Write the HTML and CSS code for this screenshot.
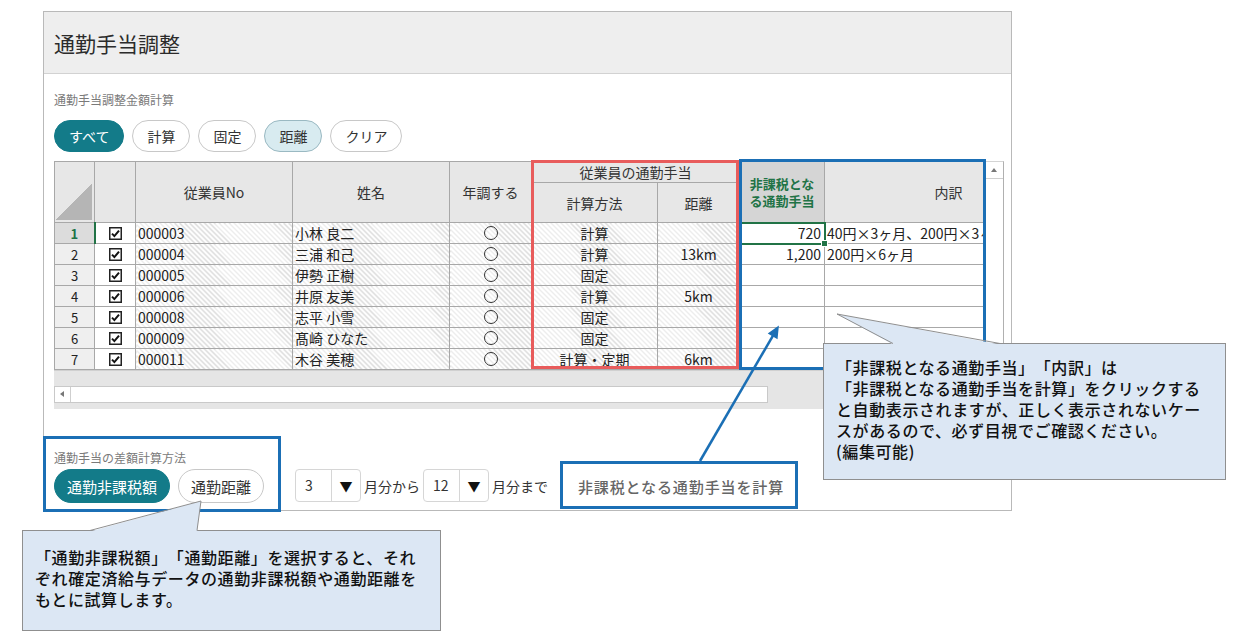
FILE: index.html
```html
<!DOCTYPE html>
<html lang="ja">

<head>
	<meta charset="UTF-8">
	<title>通勤手当調整</title>
	<link rel="stylesheet" href="styles.css">
</head>

<body>
	<div class="sheet">
		<section class="panel">
			<header class="panel-head">
				<h1>通勤手当調整</h1>
			</header>
			<div class="panel-body">
				<p class="caption">通勤手当調整金額計算</p>
				<div class="filters">
					<button class="pill active">すべて</button>
					<button class="pill">計算</button>
					<button class="pill">固定</button>
					<button class="pill soft">距離</button>
					<button class="pill">クリア</button>
				</div>

				<div class="grid">
					<div class="grid-main">
						<div class="grid-view">
							<table>
								<colgroup>
									<col style="width:40px">
									<col style="width:41px">
									<col style="width:157px">
									<col style="width:157px">
									<col style="width:82px">
									<col style="width:126px">
									<col style="width:82px">
									<col style="width:85px">
									<col style="width:248px">
								</colgroup>
								<thead>
									<tr class="head-top">
										<th rowspan="2" class="corner"></th>
										<th rowspan="2"></th>
										<th rowspan="2">従業員No</th>
										<th rowspan="2">姓名</th>
										<th rowspan="2">年調する</th>
										<th colspan="2">従業員の通勤手当</th>
										<th rowspan="2" class="tax">非課税とな<br>る通勤手当</th>
										<th rowspan="2">内訳</th>
									</tr>
									<tr class="head-sub">
										<th>計算方法</th>
										<th>距離</th>
									</tr>
								</thead>
								<tbody id="grid-body">
									<!-- rows are filled in by the script below -->
								</tbody>
							</table>
						</div>
						<div class="vscroll"><span class="vscroll-up"></span></div>
					</div>
					<div class="grid-foot">
						<div class="hscroll"><span class="hscroll-left"></span></div>
					</div>
				</div>

				<div class="calc-row">
					<div class="method">
						<p class="caption">通勤手当の差額計算方法</p>
						<div class="method-buttons">
							<button class="pill big active">通勤非課税額</button>
							<button class="pill big">通勤距離</button>
						</div>
					</div>
					<div class="months">
						<div class="select"><span class="val">3</span><span class="caret">▼</span></div>
						<span>月分から</span>
						<div class="select"><span class="val">12</span><span class="caret">▼</span></div>
						<span>月分まで</span>
					</div>
					<button class="calc-button">非課税となる通勤手当を計算</button>
				</div>
			</div>
		</section>

		<div class="mark mark-red"></div>
		<div class="mark mark-grid"></div>
		<div class="mark mark-method"></div>
		<div class="mark mark-calc"></div>

		<div class="note note-table">
			「非課税となる通勤手当」「内訳」は<br>
			「非課税となる通勤手当を計算」をクリックする<br>
			と自動表示されますが、正しく表示されないケー<br>
			スがあるので、必ず目視でご確認ください。<br>
			(編集可能)
		</div>
		<div class="note note-method">
			「通勤非課税額」「通勤距離」を選択すると、それ<br>
			ぞれ確定済給与データの通勤非課税額や通勤距離を<br>
			もとに試算します。
		</div>

		<svg class="overlay" width="1235" height="643" viewBox="0 0 1235 643">
			<!-- callout tails -->
			<polygon points="837,314 893,344.5 1000,344.5" fill="#dce7f4" />
			<polyline points="893,343.5 837,314 1000,343.5" fill="none" stroke="#8f8f8f" stroke-width="1" />
			<polygon points="201,501 90,531.5 197,531.5" fill="#dce7f4" />
			<polyline points="90,530.5 201,501 197,530.5" fill="none" stroke="#8f8f8f" stroke-width="1" />
			<!-- arrow from the calc button to the grid -->
			<line x1="700" y1="461" x2="773" y2="335.6" stroke="#1b6fb5" stroke-width="2.5" />
			<polygon points="778,327 776.9,337.9 769.1,333.4" fill="#1b6fb5" stroke="#1b6fb5" stroke-width="1.5" />
		</svg>
	</div>

	<script>
		const rows = [
			{ no: '000003', name: '小林 良二', method: '計算', dist: '', tax: '720', memo: '40円×3ヶ月、200円×3ヶ月' },
			{ no: '000004', name: '三浦 和己', method: '計算', dist: '13km', tax: '1,200', memo: '200円×6ヶ月' },
			{ no: '000005', name: '伊勢 正樹', method: '固定', dist: '', tax: '', memo: '' },
			{ no: '000006', name: '井原 友美', method: '計算', dist: '5km', tax: '', memo: '' },
			{ no: '000008', name: '志平 小雪', method: '固定', dist: '', tax: '', memo: '' },
			{ no: '000009', name: '髙崎 ひなた', method: '固定', dist: '', tax: '', memo: '' },
			{ no: '000011', name: '木谷 美穂', method: '計算・定期', dist: '6km', tax: '', memo: '' },
		];

		const check = '<svg width="13" height="13" viewBox="0 0 13 13"><rect x="0.75" y="0.75" width="11.5" height="11.5" fill="#fff" stroke="#222" stroke-width="1.5"/><path d="M3 6.6 L5.4 9.1 L10 3.6" fill="none" stroke="#111" stroke-width="2"/></svg>';

		const tbody = document.getElementById('grid-body');
		rows.forEach((r, i) => {
			const tr = document.createElement('tr');
			const current = i === 0 ? ' current' : '';
			const sel = i === 0 ? ' sel' : '';
			tr.innerHTML = `<td class="rownum${current}">${i + 1}</td>` +
				`<td class="chk">${check}</td>` +
				`<td class="ro text">${r.no}</td>` +
				`<td class="ro text">${r.name}</td>` +
				`<td class="ro center"><span class="circle"></span></td>` +
				`<td class="ro center">${r.method}</td>` +
				`<td class="ro center">${r.dist}</td>` +
				`<td class="num${sel}">${r.tax}${i === 0 ? '<span class="handle"></span>' : ''}</td>` +
				`<td class="text">${r.memo}</td>`;
			tbody.appendChild(tr);
		});
	</script>
</body>

</html>
```

FILE: styles.css
```css
body {
	margin: 0;
	font-family: "Noto Sans CJK JP", "Noto Sans", sans-serif;
	color: #333;
	background: #fff;
	text-spacing-trim: space-all;
}

.sheet {
	position: relative;
	width: 1235px;
	height: 643px;
	overflow: hidden;
}

/* panel */

.panel {
	margin: 11px 0 0 43px;
	width: 969px;
	border: 1px solid #b9b9b9;
	box-sizing: border-box;
	background: #fff;
}

.panel-head {
	background: #eeeeee;
	border-bottom: 1px solid #d2d2d2;
	height: 61px;
	display: flex;
	align-items: center;
	padding-left: 10px;
}

.panel-head h1 {
	margin: 0;
	font-size: 21px;
	font-weight: normal;
	color: #2b2b2b;
}

.panel-body {
	padding: 18px 7px 7px 10px;
}

.caption {
	margin: 0;
	font-size: 12px;
	line-height: 16px;
	color: #7a7a7a;
}

.filters {
	display: flex;
	gap: 8px;
	margin-top: 12px;
}

.pill {
	height: 32px;
	padding: 0 14px;
	border-radius: 16px;
	border: 1px solid #c8c8c8;
	background: #fff;
	font-family: inherit;
	font-size: 14px;
	color: #333;
}

.pill.active {
	background: #137b89;
	border-color: #137b89;
	color: #fff;
}

.pill.soft {
	background: #d8ebf0;
	border-color: #9ab9c2;
}

.pill.big {
	height: 34px;
	border-radius: 17px;
	font-size: 15px;
	padding: 0 12px;
}

/* grid */

.grid {
	margin-top: 9px;
	width: 950px;
}

.grid-main {
	display: flex;
}

.grid-view {
	width: 931px;
	overflow: hidden;
}

table {
	border-collapse: collapse;
	table-layout: fixed;
	width: 1018px;
	font-size: 14px;
	color: #222;
}

th,
td {
	border: 1px solid #a8a8a8;
	padding: 0;
	overflow: hidden;
	white-space: nowrap;
}

th {
	background: #e7e7e7;
	font-weight: normal;
	color: #333;
}

.head-top {
	height: 21px;
}

.head-sub {
	height: 40px;
}

tbody tr {
	height: 21px;
}

td {
	line-height: 19px;
}

th.corner {
	position: relative;
}

th.corner::after {
	content: "";
	position: absolute;
	right: 2px;
	bottom: 2px;
	width: 37px;
	height: 37px;
	background: linear-gradient(to top left, #b5b5b5 50%, transparent 50%);
}

th.tax {
	background: #d5d5d5;
	color: #217346;
	font-weight: bold;
	font-size: 13px;
	line-height: 17px;
	white-space: normal;
}

.rownum {
	background: #efefef;
	text-align: center;
	font-size: 13px;
}

.rownum.current {
	background: #dcdcdc;
	color: #217346;
	font-weight: bold;
	border-right: 2px solid #217346;
}

.chk {
	text-align: center;
}

.chk svg {
	display: block;
	margin: 0 auto;
}

.ro {
	background: repeating-linear-gradient(45deg, #fff 0 2.5px, #dadada 2.5px 3.5px);
}

.text {
	padding-left: 2px;
}

.center {
	text-align: center;
}

.num {
	text-align: right;
	padding-right: 3px;
}

td.sel {
	position: relative;
	overflow: visible;
	outline: 2px solid #217346;
	outline-offset: -1px;
}

.handle {
	position: absolute;
	right: -4px;
	bottom: -4px;
	width: 5px;
	height: 5px;
	background: #217346;
	border: 1px solid #fff;
}

.circle {
	display: inline-block;
	width: 12px;
	height: 12px;
	border: 1px solid #333;
	border-radius: 50%;
	vertical-align: -1px;
}

.vscroll {
	width: 19px;
	background: #fff;
	border-left: 1px solid #d4d4d4;
	border-right: 1px solid #b0b0b0;
	border-top: 1px solid #d4d4d4;
	box-sizing: border-box;
}

.vscroll-up {
	display: block;
	height: 16px;
	border-bottom: 1px solid #cfcfcf;
	position: relative;
}

.vscroll-up::after {
	content: "";
	position: absolute;
	left: 5px;
	top: 6px;
	border-left: 3px solid transparent;
	border-right: 3px solid transparent;
	border-bottom: 4px solid #777;
}

.grid-foot {
	height: 39px;
	background: #e5e5e5;
	border-top: 1px solid #d0d0d0;
	box-sizing: border-box;
	padding-top: 15px;
}

.hscroll {
	width: 714px;
	height: 17px;
	background: #fff;
	border: 1px solid #c9c9c9;
	box-sizing: border-box;
}

.hscroll-left {
	display: block;
	width: 15px;
	height: 100%;
	border-right: 1px solid #cfcfcf;
	position: relative;
}

.hscroll-left::after {
	content: "";
	position: absolute;
	left: 5px;
	top: 4px;
	border-top: 3px solid transparent;
	border-bottom: 3px solid transparent;
	border-right: 4px solid #777;
}

/* bottom controls */

.calc-row {
	display: flex;
	align-items: flex-end;
	margin-top: 41px;
}

.method-buttons {
	display: flex;
	gap: 8px;
	margin-top: 3px;
}

.months {
	display: flex;
	align-items: center;
	gap: 3px;
	margin-left: 31px;
	margin-bottom: 1px;
	font-size: 14px;
	color: #333;
}

.select {
	display: flex;
	width: 66px;
	height: 33px;
	border: 1px solid #d6d6d6;
	border-radius: 4px;
	box-sizing: border-box;
	line-height: 31px;
}

.select .val {
	width: 36px;
	box-sizing: border-box;
	padding-left: 9px;
	border-right: 1px solid #d6d6d6;
}

.select .caret {
	flex: 1;
	text-align: center;
	font-size: 13px;
	color: #111;
}

.calc-button {
	margin-left: 14px;
	margin-bottom: -7px;
	width: 238px;
	height: 48px;
	border: none;
	background: transparent;
	font-family: inherit;
	font-size: 15px;
	font-weight: 500;
	color: #666;
	letter-spacing: 0.9px;
}

/* annotations */

.mark {
	position: absolute;
	border: 3px solid #1b6fb5;
	box-sizing: border-box;
}

.mark-red {
	border-color: #e85c5c;
	left: 531px;
	top: 160px;
	width: 208px;
	height: 209px;
}

.mark-grid {
	left: 739px;
	top: 159px;
	width: 247px;
	height: 211px;
}

.mark-method {
	left: 43px;
	top: 436px;
	width: 238px;
	height: 76px;
}

.mark-calc {
	left: 560px;
	top: 461px;
	width: 238px;
	height: 48px;
}

.note {
	position: absolute;
	background: #dce7f4;
	border: 1px solid #8f8f8f;
	box-sizing: border-box;
	font-size: 16px;
	line-height: 21px;
	color: #111;
	letter-spacing: 0.6px;
	font-weight: 500;
}

.note-table {
	left: 823px;
	top: 343px;
	width: 403px;
	height: 137px;
	padding: 13px 0 0 12px;
}

.note-method {
	left: 22px;
	top: 530px;
	width: 419px;
	height: 101px;
	padding: 16px 0 0 12px;
}

.overlay {
	position: absolute;
	left: 0;
	top: 0;
	pointer-events: none;
}
```
